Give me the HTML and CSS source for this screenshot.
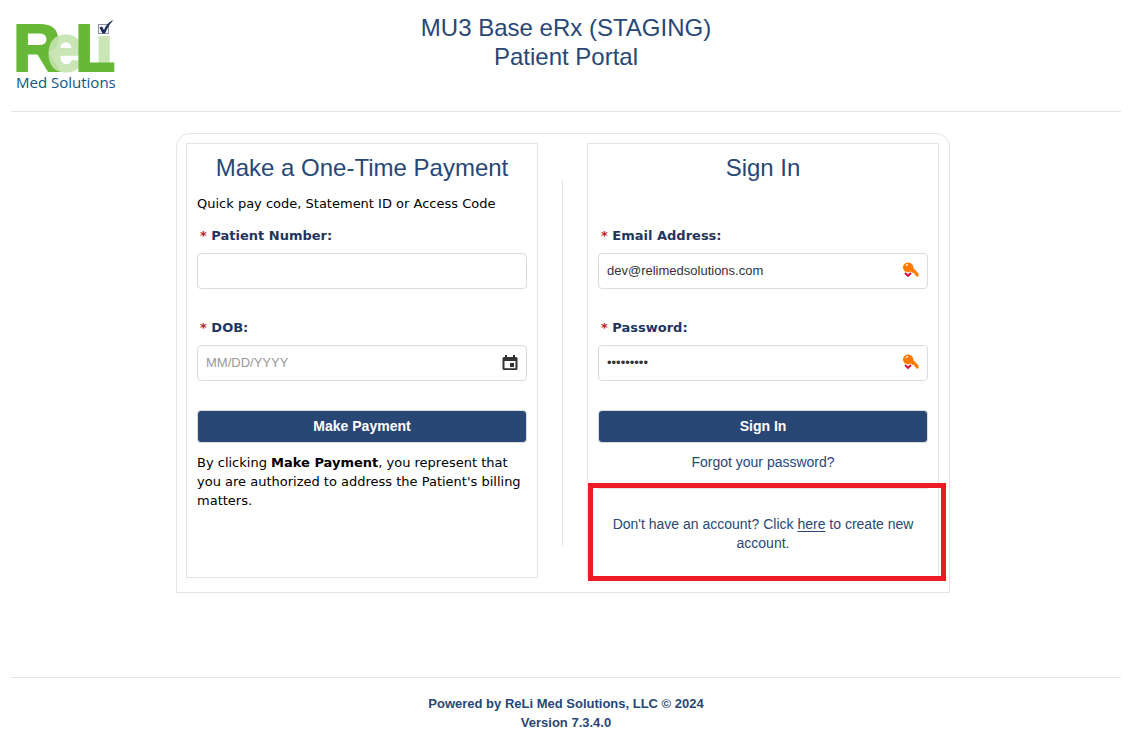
FILE: index.html
```
<!DOCTYPE html>
<html lang="en">
<head>
    <meta charset="utf-8">
    <title>Patient Portal</title>
    <link rel="stylesheet" href="styles.css">
</head>
<body>
    <header class="header">
        <div class="logo">
            <svg class="logo-mark" width="100" height="56" viewBox="0 0 100 56" role="img" aria-label="ReLi">
                <text class="logo-light" x="79" y="53">i</text>
                <text class="logo-dark" x="-3" y="53">R</text>
                <text class="logo-light" x="31" y="53">e</text>
                <text class="logo-dark" x="59" y="53">L</text>
                <!-- checkbox over the dot of the i -->
                <rect x="79" y="3" width="19" height="15" fill="#fff"/>
                <rect x="82.5" y="6.500" width="10" height="9" fill="#f4f5f8" stroke="#8b92a3"/>
                <path d="M83.500 9.500l2.500-1 2 3.500C90 7 93 3.500 97.500 2c-3.500 3.500-6 7.500-8.500 13.500h-2.500z" fill="#1c2b57"/>
            </svg>
            <div class="logo-text">Med Solutions</div>
        </div>
        <h1>MU3 Base eRx (STAGING)<br>Patient Portal</h1>
    </header>

    <main class="main">
        <div class="portal">
            <form class="panel">
                <h2>Make a One-Time Payment</h2>
                <p class="hint">Quick pay code, Statement ID or Access Code</p>

                <label for="patientNumber"><span class="required">*</span> Patient Number:</label>
                <div class="field">
                    <input type="text" id="patientNumber">
                </div>

                <label for="dob"><span class="required">*</span> DOB:</label>
                <div class="field">
                    <input type="text" id="dob" placeholder="MM/DD/YYYY">
                    <button type="button" class="calendar" aria-label="Open calendar">
                        <svg width="16" height="16" viewBox="0 0 16 16">
                            <path d="M3 0h2v2h6V0h2v2h1a1.500 1.500 0 0 1 1.500 1.500v10A1.500 1.500 0 0 1 14 15H2A1.500 1.500 0 0 1 .5 13.500v-10A1.500 1.500 0 0 1 2 2h1zM2.500 6v7.200h11V6z" fill="#333" fill-rule="evenodd"/>
                            <rect x="8" y="8" width="4" height="4" fill="#333"/>
                        </svg>
                    </button>
                </div>

                <button type="button" class="submit">Make Payment</button>
                <p class="terms">By clicking <b>Make Payment</b>, you represent that you are authorized to address the Patient's billing matters.</p>
            </form>

            <div class="divider"></div>

            <form class="panel signin">
                <h2>Sign In</h2>

                <label for="email"><span class="required">*</span> Email Address:</label>
                <div class="field">
                    <input type="text" id="email" value="dev@relimedsolutions.com">
                    <svg class="key" width="16" height="16" viewBox="0 0 16 16">
                        <path d="M5.500.5a5 5 0 0 1 4.800 5.500L15.500 11.500v3H13V13h-1.500v-2H10L8 9.500A5 5 0 1 1 5.500.5z" fill="#ff7a00"/>
                        <path d="M3 3.500 4.500 2v1z" fill="#fff" stroke="#fff"/>
                        <path d="M2 11l3 2.800 3-2.800" fill="none" stroke="#fff" stroke-width="4"/>
                        <path d="M2 11l3 2.800 3-2.800" fill="none" stroke="#d4143c" stroke-width="2"/>
                    </svg>
                </div>

                <label for="password"><span class="required">*</span> Password:</label>
                <div class="field">
                    <input type="password" id="password" value="password1">
                    <svg class="key" width="16" height="16" viewBox="0 0 16 16">
                        <path d="M5.500.5a5 5 0 0 1 4.800 5.500L15.500 11.500v3H13V13h-1.500v-2H10L8 9.500A5 5 0 1 1 5.500.5z" fill="#ff7a00"/>
                        <path d="M3 3.500 4.500 2v1z" fill="#fff" stroke="#fff"/>
                        <path d="M2 11l3 2.800 3-2.800" fill="none" stroke="#fff" stroke-width="4"/>
                        <path d="M2 11l3 2.800 3-2.800" fill="none" stroke="#d4143c" stroke-width="2"/>
                    </svg>
                </div>

                <button type="button" class="submit">Sign In</button>
                <a href="#" class="forgot">Forgot your password?</a>

                <p class="register">Don't have an account? Click <a href="#">here</a> to create new account.</p>
                <div class="highlight"></div>
            </form>
        </div>
    </main>

    <footer class="footer">
        Powered by ReLi Med Solutions, LLC © 2024<br>
        Version 7.3.4.0
    </footer>
</body>
</html>
```
FILE: styles.css
```
* {
    box-sizing: border-box;
}

body {
    margin: 0 7px 0 11px;
    background-color: #fff;
    font-family: "DejaVu Sans", Verdana, sans-serif;
    font-size: 13px;
    line-height: 19px;
    color: #000;
}

h1, h2 {
    margin: 0;
    font-family: "Liberation Sans", Arial, sans-serif;
    font-size: 24px;
    font-weight: normal;
    line-height: 29px;
    color: #294775;
    text-align: center;
}

p {
    margin: 0;
}

/* Header */
.header {
    display: grid;
    grid-template-columns: 1fr auto 1fr;
    height: 112px;
    padding-top: 13px;
    border-bottom: 1px solid #e4e4e4;
}

.logo {
    padding: 5px 0 0 5px;
}

.logo-mark {
    display: block;
    overflow: visible;
}

.logo-mark text {
    font-family: "Liberation Sans", Arial, sans-serif;
    font-size: 66px;
    font-weight: bold;
    stroke-width: 2px;
}

.logo-dark {
    fill: #68b837;
    stroke: #68b837;
}

.logo-light {
    fill: #c5e4af;
    stroke: #c5e4af;
    opacity: 0.9;
}

.logo-text {
    font-family: "Open Sans", "Segoe UI", sans-serif;
    font-size: 15px;
    line-height: 16px;
    color: #0f5585;
}

/* Payment and sign in panels */
.main {
    padding: 21px 6px 84px 0;
}

.portal {
    display: flex;
    max-width: 774px;
    margin: 0 auto;
    padding: 9px 10px 14px 9px;
    border: 1px solid #e4e4e4;
    border-radius: 14px 14px 0 0;
}

.panel {
    position: relative;
    flex: 1;
    padding: 9px 10px 24px;
    border: 1px solid #e4e4e4;
}

.divider {
    width: 1px;
    margin: 37px 24px 32px;
    background-color: #e4e4e4;
}

.hint {
    margin: 12px 0 13px;
}

.signin h2 {
    margin-bottom: 44px;
}

label {
    display: block;
    padding-left: 3px;
    font-weight: bold;
    color: #1f355e;
}

.required {
    color: #c4202b;
}

.field {
    position: relative;
    margin: 8px 0 29px;
}

input {
    display: block;
    width: 100%;
    height: 36px;
    padding: 0 40px 2px 8px;
    border: 1px solid #dcdcdc;
    border-radius: 4px;
    background-color: #fff;
    font-family: "Liberation Sans", Arial, sans-serif;
    font-size: 13px;
    color: #333;
}

input::placeholder {
    color: #999;
}

.calendar {
    position: absolute;
    top: 10px;
    right: 9px;
    padding: 0;
    border: none;
    background: none;
    cursor: pointer;
}

.calendar svg {
    display: block;
}

.key {
    position: absolute;
    top: 9px;
    right: 9px;
}

.submit {
    display: block;
    width: 100%;
    height: 33px;
    margin-bottom: 10px;
    padding: 0 0 2px;
    border: 1px solid #dcdcdc;
    border-radius: 4px;
    background-color: #294775;
    font-family: "Liberation Sans", Arial, sans-serif;
    font-size: 14px;
    font-weight: bold;
    color: #fff;
    cursor: pointer;
}

.forgot, .register {
    display: block;
    font-family: "Liberation Sans", Arial, sans-serif;
    font-size: 14px;
    color: #294775;
    text-align: center;
}

.forgot {
    text-decoration: none;
}

.register {
    margin-top: 16px;
    padding-top: 26px;
    border-top: 1px solid #e4e4e4;
}

.register a {
    color: #294775;
    text-underline-offset: 2px;
}

/* Red frame around the create account text */
.highlight {
    position: absolute;
    left: 0;
    right: -8px;
    bottom: -4px;
    height: 98px;
    border: 5px solid #ed1c24;
    pointer-events: none;
}

/* Footer */
.footer {
    padding-top: 16px;
    border-top: 1px solid #e4e4e4;
    font-family: "Liberation Sans", Arial, sans-serif;
    font-weight: bold;
    color: #294775;
    text-align: center;
}
```
